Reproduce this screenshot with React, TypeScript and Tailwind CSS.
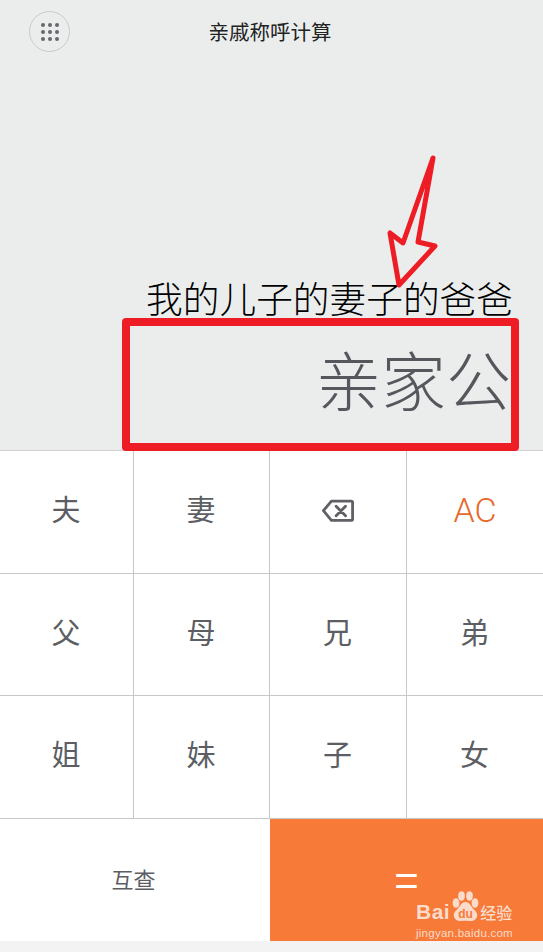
import React from 'react';

const font = '[font-family:"Noto_Sans_CJK_SC","Noto_Sans",sans-serif]';

const keys = ['夫', '妻', 'back', 'AC', '父', '母', '兄', '弟', '姐', '妹', '子', '女'];

const BackspaceIcon = () => (
  <svg width="32" height="24" viewBox="0 0 34 25" fill="none" stroke="#5f6166" strokeWidth="3" strokeLinejoin="round" strokeLinecap="round">
    <path d="M10 2 H31 a1.5 1.5 0 0 1 1.5 1.5 V21 a1.5 1.5 0 0 1 -1.5 1.5 H10 L1.5 12.2 Z" />
    <path d="M15 7.5 L25 17.5 M25 7.5 L15 17.5" />
  </svg>
);

const Key = ({ label }: { label: string }) => {
  if (label === 'back') {
    return (
      <button className="flex items-center justify-center border-r border-b border-[#c8c8c8] bg-white pb-[3px]">
        <BackspaceIcon />
      </button>
    );
  }
  if (label === 'AC') {
    return (
      <button className="flex items-center justify-center border-b border-[#c8c8c8] bg-white pb-[4px] [font-family:'Roboto',sans-serif] text-[34px] font-light text-[#e9692c]">
        AC
      </button>
    );
  }
  return (
    <button className="flex items-center justify-center border-r border-b border-[#c8c8c8] bg-white pr-[1px] pb-[6px] text-[29px] font-normal text-[#5c5e63] last:border-r-0 nth-[4n]:border-r-0">
      {label}
    </button>
  );
};

const Watermark = () => (
  <div className="absolute top-[890px] left-[416px] flex w-[128px] flex-col text-[#fbdccb]">
    <div className="flex h-[34px] items-end">
      <span className="[font-family:'Liberation_Sans',sans-serif] text-[21px] leading-[24px] font-bold tracking-[0.5px]">Bai</span>
      <svg width="30" height="32" viewBox="0 0 30 32" className="mb-[1px]" fill="#fbdccb">
        <ellipse cx="6" cy="12" rx="3.4" ry="4.8" />
        <ellipse cx="11.5" cy="5" rx="3.4" ry="4.8" />
        <ellipse cx="19.5" cy="5" rx="3.4" ry="4.8" />
        <ellipse cx="25" cy="12" rx="3.4" ry="4.8" />
        <path d="M15.5 11 C11 11 10 16 6 19.5 C1 24 5 31 11 30 C14 29.5 17 29.5 20 30 C26 31 30 24 25 19.5 C21 16 20 11 15.5 11 Z" />
        <text x="15.5" y="27" textAnchor="middle" fontSize="12" fontWeight="700" fill="#f77a39" fontFamily="Liberation Sans, sans-serif">du</text>
      </svg>
      <span className="text-[16px] leading-[24px] font-medium">经验</span>
    </div>
    <span className="mt-[1px] [font-family:'Liberation_Sans',sans-serif] text-[11.5px] leading-[16px] tracking-[0.25px]">jingyan.baidu.com</span>
  </div>
);

export default function App() {
  return (
    <div className={`relative h-[952px] w-[543px] overflow-hidden bg-[#f3f3f3] ${font}`}>
      <div className="flex h-[450px] flex-col bg-[#ebeded]">
        <header className="relative flex h-[62px] items-center justify-center">
          <span className="ml-[-3px] text-[20.5px] text-[#222]">亲戚称呼计算</span>
          <button className="absolute top-[11px] left-[29px] grid h-[41px] w-[41px] place-items-center rounded-full border border-[#c9cbcb]">
            <span className="grid grid-cols-3 gap-[3px]">
              {Array.from({ length: 9 }).map((_, i) => (
                <span key={i} className="h-[4px] w-[4px] rounded-full bg-[#66686b]" />
              ))}
            </span>
          </button>
        </header>
        <div className="flex flex-1 flex-col items-end justify-end pr-[30px] pb-[34px]">
          <p className="text-[36.7px] leading-[46px] font-light text-[#000]">我的儿子的妻子的爸爸</p>
          <p className="mt-[21px] mr-[2px] text-[65px] leading-[75px] font-light text-[#55575c]">亲家公</p>
        </div>
      </div>

      <div className="grid grid-cols-[134px_136px_137px_136px] grid-rows-[123px_122px_123px] border-t border-[#d0d0d0]">
        {keys.map(k => (
          <Key key={k} label={k} />
        ))}
      </div>
      <div className="flex h-[122px]">
        <button className="w-[270px] bg-white pr-[3px] pb-[3px] text-[22px] font-normal text-[#5c5e63]">互查</button>
        <button className="flex flex-1 items-center justify-center bg-[#f77a39] [font-family:'Liberation_Sans',sans-serif] text-[42px] text-white">=</button>
      </div>

      {/* red annotation drawn over the screenshot */}
      <div className="absolute top-[318px] left-[122px] h-[133px] w-[397px] rounded-[4px] border-[8px] border-[#ee1c25]" />
      <svg className="absolute top-0 left-0" width="543" height="320" fill="none" stroke="#ee1c25" strokeWidth="5" strokeLinejoin="round">
        <path d="M433 158 L403 243 L390 233 L399 285 L435 246 L418 242 Z" />
      </svg>
      <Watermark />
    </div>
  );
}
